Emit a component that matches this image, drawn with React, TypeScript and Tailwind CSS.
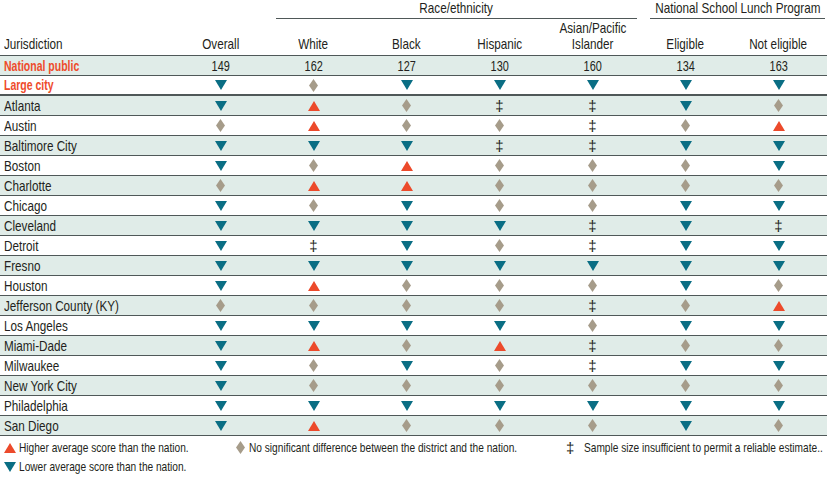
import React from 'react';

// U = higher, D = lower, S = no significant difference, X = sample size insufficient
const rows: [string, string][] = [
  ['Atlanta', 'DUSXXDS'],
  ['Austin', 'SUSSXSU'],
  ['Baltimore City', 'DDDXXDD'],
  ['Boston', 'DSUSSSD'],
  ['Charlotte', 'SUUSSSS'],
  ['Chicago', 'DSDSSDD'],
  ['Cleveland', 'DDDDXDX'],
  ['Detroit', 'DXDSXDD'],
  ['Fresno', 'DDDDDDD'],
  ['Houston', 'DUSSSDS'],
  ['Jefferson County (KY)', 'SSSSXSU'],
  ['Los Angeles', 'DDDDSDD'],
  ['Miami-Dade', 'DUSUXSS'],
  ['Milwaukee', 'DSDSXDD'],
  ['New York City', 'DSSSSSS'],
  ['Philadelphia', 'DDDDDDD'],
  ['San Diego', 'DUSSSDS'],
];

const national = ['149', '162', '127', '130', '160', '134', '163'];

// the source uses a condensed face; Arial metrics squeezed horizontally stand in for it
function Narrow({ children, center, bold }: { children: React.ReactNode; center?: boolean; bold?: boolean }) {
  return (
    <span
      className={`inline-block whitespace-nowrap ${center ? 'origin-center' : 'origin-left'} ${
        bold ? 'font-bold scale-x-[0.7]' : 'scale-x-[0.78]'
      }`}
    >
      {children}
    </span>
  );
}

function Up() {
  return (
    <svg width="12" height="10" viewBox="0 0 12 10" className="shrink-0">
      <path d="M6 0L12 10H0Z" fill="#ec4a2b" />
    </svg>
  );
}

function Down() {
  return (
    <svg width="12" height="10" viewBox="0 0 12 10" className="shrink-0">
      <path d="M0 0H12L6 10Z" fill="#0a6e84" />
    </svg>
  );
}

function Same() {
  return (
    <svg width="9" height="13" viewBox="0 0 9 13" className="shrink-0">
      <path d="M4.5 0L9 6.5L4.5 13L0 6.5Z" fill="#a69c8a" />
    </svg>
  );
}

function Dagger() {
  return <span className="text-[15px] leading-none text-[#231f20]">‡</span>;
}

function Mark({ m }: { m: string }) {
  if (m === 'U') return <Up />;
  if (m === 'D') return <Down />;
  if (m === 'S') return <Same />;
  return <Dagger />;
}

const cols = 'grid grid-cols-[174px_repeat(7,93px)]';

export default function App() {
  return (
    <div
      className="w-[827px] h-[477px] overflow-hidden bg-white text-[#231f20] text-[15px]"
      style={{ fontFamily: '"Liberation Sans", Arial, sans-serif' }}
    >
      {/* header */}
      <div className={`${cols} grid-rows-[19px_36px] h-[56px] border-b border-[#4f5858]`}>
        <div className="row-span-2 flex items-end pl-[4px] pb-[3px] leading-[16px]">
          <Narrow>Jurisdiction</Narrow>
        </div>
        <div className="row-span-2 flex items-end justify-center pb-[3px] leading-[16px]">
          <Narrow center>Overall</Narrow>
        </div>
        <div className="col-span-4 ml-[9px] mr-[2px] border-b border-[#4f5858] flex items-center justify-center leading-none pb-[3px]">
          <Narrow center>Race/ethnicity</Narrow>
        </div>
        <div className="col-span-2 ml-[11px] border-b border-[#4f5858] flex items-center justify-center leading-none pb-[3px]">
          <Narrow center>National School Lunch Program</Narrow>
        </div>
        {['White', 'Black', 'Hispanic'].map((c) => (
          <div key={c} className="flex items-end justify-center pb-[3px] leading-[16px]">
            <Narrow center>{c}</Narrow>
          </div>
        ))}
        <div className="flex flex-col items-center justify-end pb-[3px] leading-[16px]">
          <Narrow center>Asian/Pacific</Narrow>
          <Narrow center>Islander</Narrow>
        </div>
        {['Eligible', 'Not eligible'].map((c) => (
          <div key={c} className="flex items-end justify-center pb-[3px] leading-[16px]">
            <Narrow center>{c}</Narrow>
          </div>
        ))}
      </div>

      {/* national public */}
      <div className={`${cols} h-[20px] items-center bg-[#e0ece8] border-b border-[#4f5858] leading-[18px]`}>
        <div className="pl-[4px] text-[#ee4b2b]">
          <Narrow bold>National public</Narrow>
        </div>
        {national.map((n, i) => (
          <div key={i} className="flex justify-center text-[14px]">
            <Narrow center>{n}</Narrow>
          </div>
        ))}
      </div>

      {/* large city */}
      <div className={`${cols} h-[20px] items-center bg-white border-b-2 border-[#4f5858] leading-[18px]`}>
        <div className="pl-[4px] text-[#ee4b2b]">
          <Narrow bold>Large city</Narrow>
        </div>
        {'DSDDDDD'.split('').map((m, i) => (
          <div key={i} className="flex justify-center items-center">
            <Mark m={m} />
          </div>
        ))}
      </div>

      {rows.map(([name, marks], r) => (
        <div
          key={name}
          className={`${cols} h-[20px] items-center border-b border-[#4f5858] leading-[18px] ${r % 2 === 0 ? 'bg-[#e0ece8]' : 'bg-white'}`}
        >
          <div className="pl-[4px]">
            <Narrow>{name}</Narrow>
          </div>
          {marks.split('').map((m, i) => (
            <div key={i} className="flex justify-center items-center">
              <Mark m={m} />
            </div>
          ))}
        </div>
      ))}

      {/* legend */}
      <div className="flex pt-[2px] pl-[4px] text-[13px] leading-[19px]">
        <div className="w-[232px] flex flex-col">
          <div className="flex items-center gap-[3px]">
            <Up />
            <Narrow>Higher average score than the nation.</Narrow>
          </div>
          <div className="flex items-center gap-[3px]">
            <Down />
            <Narrow>Lower average score than the nation.</Narrow>
          </div>
        </div>
        <div className="w-[330px] flex items-start">
          <div className="flex items-center gap-[4px] h-[19px]">
            <Same />
            <Narrow>No significant difference between the district and the nation.</Narrow>
          </div>
        </div>
        <div className="flex items-start">
          <div className="flex items-center gap-[10px] h-[19px]">
            <Dagger />
            <Narrow>Sample size insufficient to permit a reliable estimate..</Narrow>
          </div>
        </div>
      </div>
    </div>
  );
}
